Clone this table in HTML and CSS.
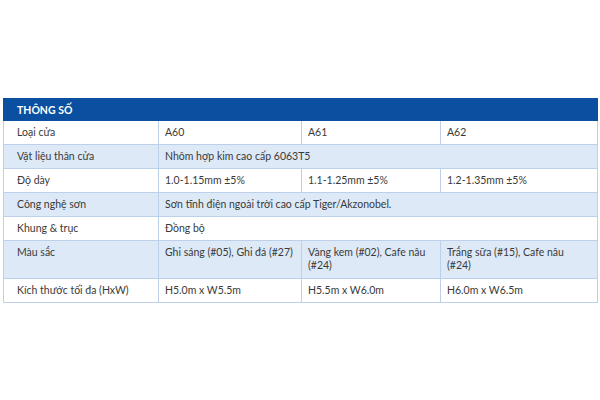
FILE: index.html
```html
<!DOCTYPE html>
<html lang="vi">
<head>
<meta charset="utf-8">
<link rel="stylesheet" href="styles.css">
</head>
<body>
<table class="spec">
  <colgroup>
    <col class="c1"><col class="c2"><col class="c3"><col class="c4">
  </colgroup>
  <thead>
    <tr><th colspan="4">THÔNG SỐ</th></tr>
  </thead>
  <tbody>
    <tr><td>Loại cửa</td><td>A60</td><td>A61</td><td>A62</td></tr>
    <tr class="alt"><td>Vật liệu thân cửa</td><td colspan="3">Nhôm hợp kim cao cấp 6063T5</td></tr>
    <tr><td>Độ dày</td><td>1.0-1.15mm ±5%</td><td>1.1-1.25mm ±5%</td><td>1.2-1.35mm ±5%</td></tr>
    <tr class="alt"><td>Công nghệ sơn</td><td colspan="3">Sơn tĩnh điện ngoài trời cao cấp Tiger/Akzonobel.</td></tr>
    <tr><td>Khung &amp; trục</td><td colspan="3">Đồng bộ</td></tr>
    <tr class="alt tall"><td>Màu sắc</td><td>Ghi sáng (#05), Ghi đá (#27)</td><td>Vàng kem (#02), Cafe nâu<br>(#24)</td><td>Trắng sữa (#15), Cafe nâu<br>(#24)</td></tr>
    <tr><td>Kích thước tối đa (HxW)</td><td>H5.0m x W5.5m</td><td>H5.5m x W6.0m</td><td>H6.0m x W6.5m</td></tr>
  </tbody>
</table>
</body>
</html>
```
FILE: styles.css
```css
html, body {
  margin: 0;
  padding: 0;
  background: #ffffff;
}
body {
  padding: 98px 0 0 3px;
  font-family: Lato, "Open Sans", sans-serif;
  color: #3a3a3a;
}
.spec {
  width: 594px;
  border-collapse: collapse;
  table-layout: fixed;
  font-size: 10.5px;
}
.c1 { width: 155px; }
.c2 { width: 143px; }
.c3 { width: 139px; }
.c4 { width: 157px; }
.spec th {
  background: #0b4fa0;
  color: #ffffff;
  text-align: left;
  font-weight: 700;
  font-size: 10.5px;
  height: 22px;
  padding: 0 0 0 13px;
  border: 1px solid #0b4fa0;
  box-sizing: border-box;
}
.spec td {
  border: 1px solid #bcd1e9;
  padding: 5px 6px;
  height: 23px;
  line-height: 13px;
  vertical-align: top;
  box-sizing: border-box;
}
.spec td:first-child {
  padding-left: 13px;
}
.spec tr.alt td {
  background: #dde9f6;
}
.spec tr.tall td {
  height: 38px;
}
```
